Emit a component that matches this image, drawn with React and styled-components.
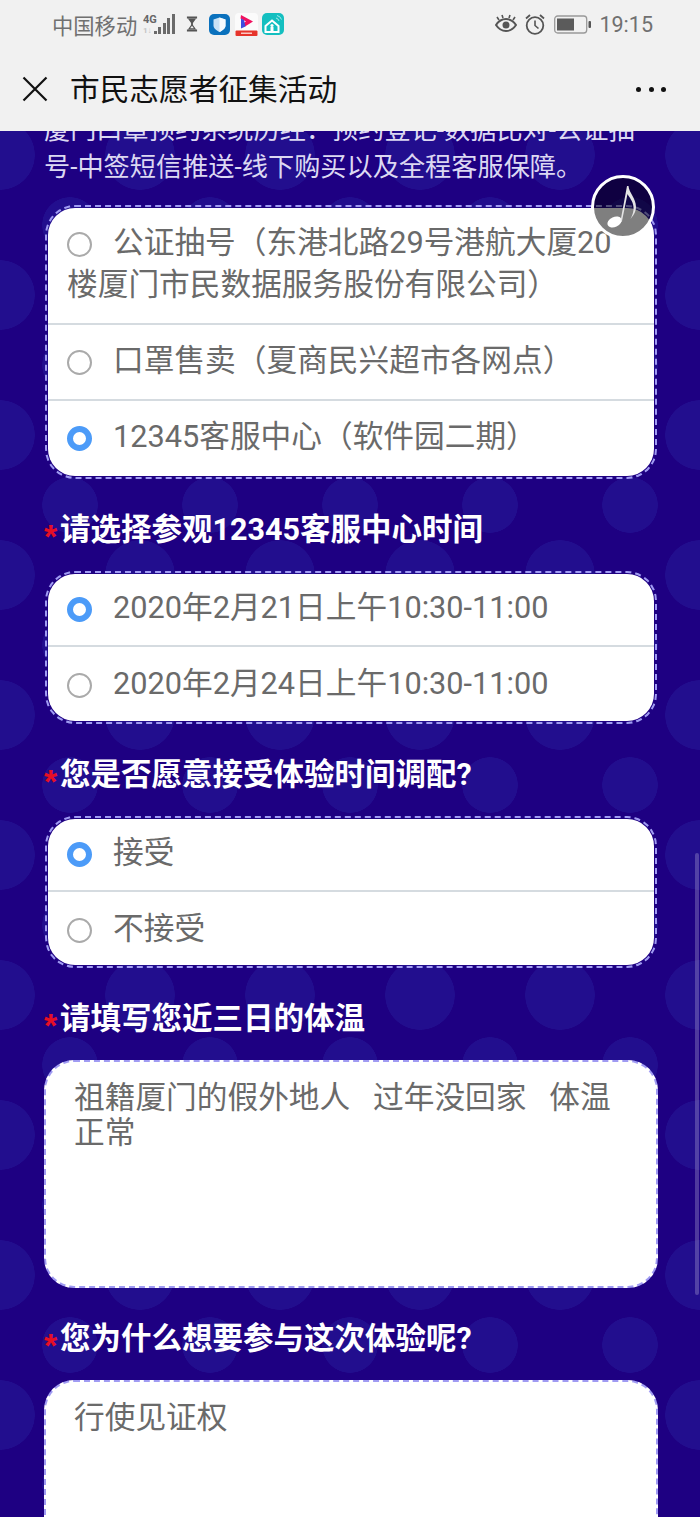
import styled, { createGlobalStyle } from "styled-components";

const GlobalStyle = createGlobalStyle`
  html, body {
    margin: 0;
    padding: 0;
    background: #1e0082;
  }
  * {
    box-sizing: border-box;
  }
`;

const FONT = `Roboto, "Noto Sans CJK SC", sans-serif`;

const Screen = styled.div`
  position: relative;
  width: 700px;
  height: 1517px;
  overflow: hidden;
  display: flex;
  flex-direction: column;
  font-family: ${FONT};
  background-color: #1e0082;
`;

const Header = styled.header`
  flex: none;
  height: 131px;
  background: #f1f1f1;
`;

const StatusBar = styled.div`
  height: 48px;
  padding: 0 47px 0 52px;
  display: flex;
  align-items: center;
  color: #707070;
  font-size: 21.3px;
`;

const StatusLeft = styled.div`
  display: flex;
  align-items: center;
`;

const StatusRight = styled.div`
  margin-left: auto;
  display: flex;
  align-items: center;
  gap: 8px;
`;

const StatusIcon = styled.span`
  display: flex;
  margin-left: ${(p) => p.$left || 0}px;
`;

const Time = styled.span`
  font-size: 21.5px;
`;

const NavBar = styled.div`
  height: 83px;
  padding: 0 34px 1px 22px;
  display: flex;
  align-items: center;
`;

const NavTitle = styled.h1`
  margin: 0 0 3px 22px;
  font-size: 29.7px;
  font-weight: 400;
  color: #111;
  white-space: nowrap;
`;

const Dots = styled.div`
  margin-left: auto;
  display: flex;
  gap: 7.5px;
`;

const Dot = styled.span`
  width: 5px;
  height: 5px;
  border-radius: 50%;
  background: #111;
`;

const Main = styled.main`
  flex: 1;
  overflow: hidden;
  background-color: #1e0082;
  background-image: radial-gradient(circle, #220e8e 34.5px, transparent 35px),
    radial-gradient(circle, #220e8e 27.5px, transparent 28px);
  background-size: 140px 140px;
  background-position: -70px -46px, 0 24px;
`;

const Form = styled.div`
  margin-top: -19px;
  padding: 0 44px;
`;

const Intro = styled.p`
  margin: 0 0 19px;
  font-size: 26.2px;
  line-height: 37px;
  font-weight: 400;
  color: #dcd8f2;
`;

const Question = styled.div`
  margin-bottom: 30px;
`;

const Label = styled.div`
  display: flex;
  align-items: baseline;
  height: 38px;
  margin: 0 0 24px;
  color: #fff;
  font-size: 30.5px;
  line-height: 38px;
  font-weight: 700;
  white-space: nowrap;
`;

const Star = styled.span`
  width: 16px;
  color: #e60f26;
  font-family: "Liberation Sans", sans-serif;
  font-size: 34px;
  font-weight: 700;
  line-height: 38px;
  transform: translateY(8px);
`;

const Card = styled.div`
  margin-right: -1px;
  margin-left: 1px;
  border: 2px dashed #a09bf3;
  border-radius: 30px;
  padding: 1px;
`;

const CardInner = styled.div`
  background: #fff;
  border-radius: 27px;
  overflow: hidden;
`;

const Option = styled.div`
  padding: ${(p) => p.$pad[0]}px 28px ${(p) => p.$pad[1]}px 19px;
  font-size: 30.7px;
  line-height: 42px;
  font-weight: 400;
  color: #6a6a6a;
  & + & {
    border-top: 2px solid #d5dbe0;
  }
`;

const Radio = styled.span`
  display: inline-block;
  width: 25px;
  height: 25px;
  border-radius: 50%;
  margin-right: 21px;
  vertical-align: -4px;
  background: #fff;
  border: ${(p) => (p.$checked ? "6.5px solid #4c9bf8" : "2px solid #aaa")};
`;

const TextBox = styled.div`
  margin-right: -2px;
  height: ${(p) => p.$height}px;
  background: #fff;
  border: 2px dashed #a09bf3;
  border-radius: 30px;
  padding: 18px 28px;
  font-size: 30.7px;
  line-height: 35px;
  font-weight: 400;
  color: #6a6a6a;
  white-space: pre-wrap;
`;

const MusicButton = styled.div`
  position: absolute;
  left: 591px;
  top: 175px;
  width: 64px;
  height: 64px;
  border-radius: 50%;
  border: 3px solid #fff;
  background: rgba(0, 0, 0, 0.5);
  display: flex;
  align-items: center;
  justify-content: center;
`;

const ScrollThumb = styled.div`
  position: absolute;
  right: 1px;
  top: 853px;
  width: 4px;
  height: 442px;
  border-radius: 2px;
  background: rgba(255, 255, 255, 0.22);
`;

const Signal = () => (
  <svg width="33" height="22" viewBox="0 0 33 22">
    <text x="0" y="10" fontSize="11" fontWeight="700" fill="#666" fontFamily="Roboto">4G</text>
    <text x="0" y="20" fontSize="8" fontWeight="700" fill="#c4c4c4" fontFamily="Roboto">1↓</text>
    <g fill="#6a6a6a">
      <rect x="11" y="18" width="3" height="3" />
      <rect x="15" y="14" width="3" height="7" />
      <rect x="20" y="10" width="3" height="11" />
      <rect x="24" y="5" width="3" height="16" />
      <rect x="29" y="1" width="3" height="20" />
    </g>
  </svg>
);

const Hourglass = () => (
  <svg width="12" height="16" viewBox="0 0 13 16">
    <path d="M1 1h11M1 15h11" stroke="#555" strokeWidth="2" />
    <path d="M2 2h9L7.5 7v2L11 14H2l3.5-5V7z" fill="#555" />
    <path d="M4.5 12.5L6.5 10l2 2.5z" fill="#eee" />
  </svg>
);

const ShieldApp = () => (
  <svg width="21" height="21" viewBox="0 0 21 21">
    <rect width="21" height="21" rx="5" fill="#0a71bd" />
    <path d="M10.5 3.500l6 2v6c0 3-3 5-6 6.500C7.500 16.500 4.500 14.500 4.500 11.500v-6z" fill="#c8e2f6" />
    <path d="M10.500 3.500l6 2v6c0 3-3 5-6 6.500z" fill="#f4fafe" />
  </svg>
);

const VideoApp = () => (
  <svg width="23" height="23" viewBox="0 0 23 23">
    <rect width="23" height="23" rx="4" fill="#fbfbfb" />
    <path d="M6 2l12 6.500-8 5-1.500-3.500 2.500-1.500-5.500-3z" fill="#f0115f" />
    <path d="M6 5.500l3 1.500 1.500 6.500-4.500 2z" fill="#3d4be0" />
    <rect x="0.500" y="17.500" width="22" height="5.500" rx="1" fill="#e6342b" />
    <rect x="6" y="19.500" width="11" height="1.500" fill="#fbc7c2" />
  </svg>
);

const HomeApp = () => (
  <svg width="22" height="22" viewBox="0 0 22 22">
    <rect width="22" height="22" rx="5" fill="#14bfc0" />
    <path d="M10 7.500l6.500 5.500v6H3.500v-6z" fill="none" stroke="#fff" strokeWidth="2" />
    <circle cx="10" cy="12.500" r="1.600" fill="#fff" />
    <rect x="8.500" y="14" width="3" height="5" fill="#fff" />
    <path d="M14 5a4 4 0 0 1 3 3M15 2.500a6 6 0 0 1 4.500 4" fill="none" stroke="#a4eaea" strokeWidth="1" />
  </svg>
);

const EyeIcon = () => (
  <svg width="22" height="20" viewBox="0 0 22 20">
    <path d="M1 11c3-4.500 6-6 10-6s7 1.500 10 6c-3 4.500-6 6-10 6s-7-1.500-10-6z" fill="none" stroke="#555" strokeWidth="2" />
    <circle cx="11" cy="11" r="3.500" fill="#555" />
    <path d="M4 6L2 3M8 4L7 1M14 4l1-3M18 6l2-3" stroke="#555" strokeWidth="1.600" />
  </svg>
);

const AlarmIcon = () => (
  <svg width="20" height="21" viewBox="0 0 20 21">
    <circle cx="10" cy="11.500" r="8.300" fill="none" stroke="#555" strokeWidth="1.800" />
    <path d="M10 6.500V11.500l3.500 3" fill="none" stroke="#555" strokeWidth="1.600" />
    <path d="M1 4.500L5 1M19 4.500L15 1" stroke="#555" strokeWidth="1.800" />
  </svg>
);

const BatteryIcon = () => (
  <svg width="37" height="19" viewBox="0 0 37 19">
    <rect x="0.700" y="1" width="32" height="17" rx="3" fill="none" stroke="#999" strokeWidth="1.300" />
    <rect x="3" y="3.500" width="17" height="12" fill="#5b5b5b" />
    <rect x="34.500" y="6" width="2.500" height="7" rx="1" fill="#555" />
  </svg>
);

const CloseIcon = () => (
  <svg width="26" height="26" viewBox="0 0 26 26">
    <path d="M1.500 1.500l23 23M24.500 1.500l-23 23" stroke="#111" strokeWidth="2.200" />
  </svg>
);

const NoteIcon = () => (
  <svg width="36" height="50" viewBox="0 0 36 50">
    <ellipse cx="9.500" cy="40" rx="7.500" ry="5" fill="#fff" transform="rotate(-24 9.500 40)" />
    <path
      d="M15.500 39L22 4h1.500C24 11 31 16 31 25c0 5-3 9-5.500 12 2-4 3.500-8 3-12-.5-6-4.500-10-6-13L16.800 40z"
      fill="#e4e4e4"
    />
  </svg>
);

const placeOptions = [
  { text: "公证抽号（东港北路29号港航大厦20楼厦门市民数据服务股份有限公司）", pad: [14, 17] },
  { text: "口罩售卖（夏商民兴超市各网点）", pad: [15, 17] },
  { text: "12345客服中心（软件园二期）", checked: true, pad: [15, 18] },
];

const questions = [
  {
    label: "请选择参观12345客服中心时间",
    options: [
      { text: "2020年2月21日上午10:30-11:00", checked: true, pad: [13, 16] },
      { text: "2020年2月24日上午10:30-11:00", pad: [16, 16] },
    ],
  },
  {
    label: "您是否愿意接受体验时间调配?",
    options: [
      { text: "接受", checked: true, pad: [13, 16] },
      { text: "不接受", pad: [16, 15] },
    ],
  },
];

const OptionCard = ({ options }) => (
  <Card>
    <CardInner>
      {options.map((o) => (
        <Option key={o.text} $pad={o.pad}>
          <Radio $checked={o.checked} />
          {o.text}
        </Option>
      ))}
    </CardInner>
  </Card>
);

const App = () => {
  return (
    <Screen>
      <GlobalStyle />
      <Header>
        <StatusBar>
          <StatusLeft>
            <span>中国移动</span>
            <StatusIcon $left={6}>
              <Signal />
            </StatusIcon>
            <StatusIcon $left={10}>
              <Hourglass />
            </StatusIcon>
            <StatusIcon $left={11}>
              <ShieldApp />
            </StatusIcon>
            <StatusIcon $left={5}>
              <VideoApp />
            </StatusIcon>
            <StatusIcon $left={4}>
              <HomeApp />
            </StatusIcon>
          </StatusLeft>
          <StatusRight>
            <StatusIcon>
              <EyeIcon />
            </StatusIcon>
            <StatusIcon>
              <AlarmIcon />
            </StatusIcon>
            <StatusIcon $left={1}>
              <BatteryIcon />
            </StatusIcon>
            <Time>19:15</Time>
          </StatusRight>
        </StatusBar>
        <NavBar>
          <CloseIcon />
          <NavTitle>市民志愿者征集活动</NavTitle>
          <Dots>
            <Dot />
            <Dot />
            <Dot />
          </Dots>
        </NavBar>
      </Header>
      <Main>
        <Form>
          <Intro>
            厦门口罩预约系统历经：预约登记-数据比对-公证抽号-中签短信推送-线下购买以及全程客服保障。
          </Intro>
          <Question>
            <OptionCard options={placeOptions} />
          </Question>
          {questions.map((q) => (
            <Question key={q.label}>
              <Label>
                <Star>*</Star>
                {q.label}
              </Label>
              <OptionCard options={q.options} />
            </Question>
          ))}
          <Question>
            <Label>
              <Star>*</Star>
              请填写您近三日的体温
            </Label>
            <TextBox $height={228}>祖籍厦门的假外地人   过年没回家   体温正常</TextBox>
          </Question>
          <Question>
            <Label>
              <Star>*</Star>
              您为什么想要参与这次体验呢?
            </Label>
            <TextBox $height={228}>行使见证权</TextBox>
          </Question>
        </Form>
      </Main>
      <MusicButton>
        <NoteIcon />
      </MusicButton>
      <ScrollThumb />
    </Screen>
  );
};

export default App;
